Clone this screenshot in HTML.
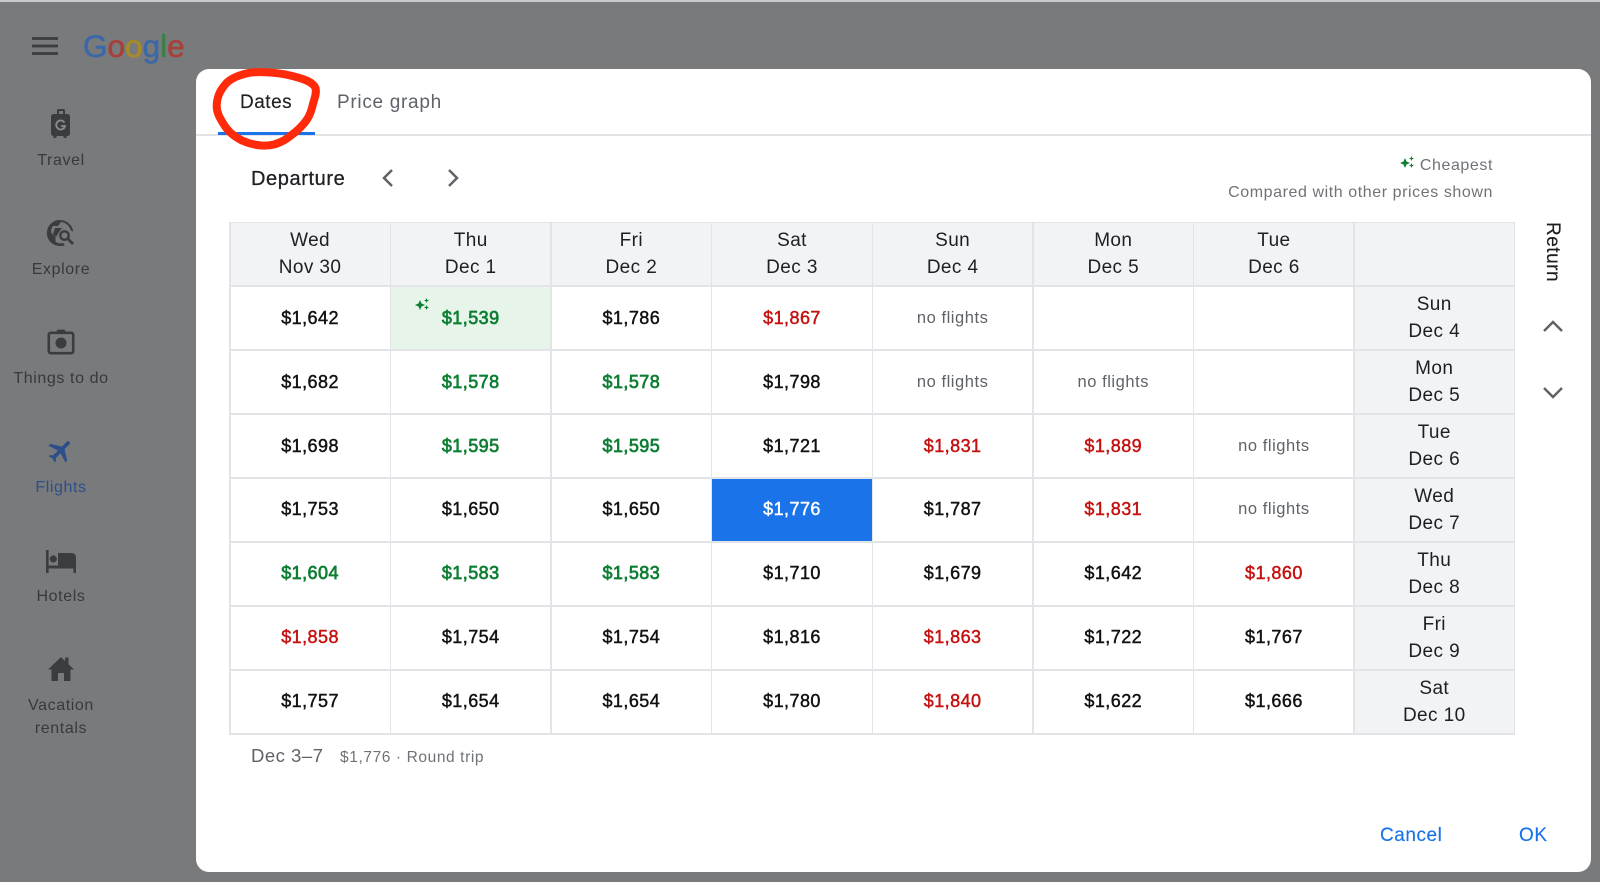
<!DOCTYPE html>
<html lang="en">
<head>
<meta charset="utf-8">
<title>Google Flights - Dates</title>
<style>
*{box-sizing:border-box;margin:0;padding:0}
html,body{width:1600px;height:882px;overflow:hidden;background:#797a7c}
body{font-family:"Liberation Sans",sans-serif;position:relative}
#w{position:absolute;left:0;top:0;width:1600px;height:882px;filter:blur(.35px)}
.a{position:absolute;white-space:nowrap}
.strip{left:0;top:0;width:1600px;height:2px;background:#c9cacc}
.nav{left:0;width:122px;text-align:center;color:#37393c;font-size:16px;letter-spacing:.6px;line-height:22px}
.nav.f{color:#2c4f8a}
.ic{position:absolute}
#dlg{position:absolute;left:196px;top:69px;width:1395px;height:803px;background:#fff;border-radius:13px}
#grid{position:absolute;left:229px;top:221.5px;width:1286px;height:513px;background:#e2e4e8;display:grid;grid-template-columns:repeat(7,159.15px) 1fr;grid-template-rows:repeat(8,1fr);gap:1.5px;padding:1.5px}
#grid div{background:#fff;display:flex;align-items:center;justify-content:center;text-align:center;font-size:18px;color:#111;letter-spacing:.45px;-webkit-text-stroke:.45px currentColor;position:relative}
#grid div.h{background:#f1f3f4;line-height:27px;-webkit-text-stroke:0;color:#1d1f21;font-size:19px;letter-spacing:.4px;padding-bottom:0}
#grid div.g{color:#0d7e33;-webkit-text-stroke:.7px currentColor}
#grid div.r{color:#c5100f}
#grid div.n{color:#5f6368;font-size:16.5px;letter-spacing:.55px;-webkit-text-stroke:0}
#grid div.s{background:#1a73e8;color:#fff}
#grid div.c{background:#e6f4ea}
</style>
</head>
<body>
<div id="w">
<div class="a strip"></div>

<!-- header -->
<svg class="ic" style="left:31px;top:37px" width="28" height="18" viewBox="0 0 28 18"><path d="M1 1.500h26M1 9h26M1 16.500h26" stroke="#3a3c3f" stroke-width="2.800" fill="none"/></svg>
<div class="a" style="left:83px;top:27px;font-size:31.5px;line-height:38px;letter-spacing:0;-webkit-text-stroke:.6px currentColor"><span style="color:#3c68a8">G</span><span style="color:#a8403a">o</span><span style="color:#a98a2a">o</span><span style="color:#3c68a8">g</span><span style="color:#3b8048">l</span><span style="color:#a8403a">e</span></div>

<!-- sidebar -->
<svg class="ic" style="left:46px;top:108px" width="30" height="32" viewBox="0 0 30 32"><path d="M11 6V2.500C11 1.700 11.700 1 12.500 1h5c.8 0 1.500.7 1.500 1.500V6h2c2 0 3 1 3 3v16c0 2-1 3-3 3h-.5v2h-3v-2h-7v2h-3v-2H8c-2 0-3-1-3-3V9c0-2 1-3 3-3zm2 0h4V3h-4z" fill="#3a3c3f" fill-rule="evenodd"/><path d="M18.500 14.500a4.500 4.500 0 1 0 .6 3.500H15" stroke="#8b8c8e" stroke-width="1.800" fill="none"/></svg>
<div class="a nav" style="top:150px">Travel</div>

<svg class="ic" style="left:46px;top:218px" width="32" height="32" viewBox="0 0 32 32"><path d="M14 2a13 13 0 0 0-9 22.500C8 27 11 28 14.500 28c1.500 0 3-.3 4.300-.8l-1.500-2.200c-1 .3-1.900.4-2.800.4-2 0-3.500-.5-5-2V19l-4-4c-.2-.6-.3-1.200-.3-2 0-1.800.6-3.500 1.600-5H12l3-4c5 .5 8.700 4 9.800 8.500l2.500 1C26.500 7.500 21 2 14 2z" fill="#3a3c3f"/><path d="M9 10h7l-3 4-3 5 -3-3z" fill="#3a3c3f"/><circle cx="18.500" cy="17.500" r="4.200" stroke="#3a3c3f" stroke-width="2.400" fill="none"/><path d="M21.800 20.800 27 26" stroke="#3a3c3f" stroke-width="2.800"/></svg>
<div class="a nav" style="top:259px">Explore</div>

<svg class="ic" style="left:47px;top:329px" width="28" height="26" viewBox="0 0 28 26"><path d="M9 3l1.500-2.400h7L19 3" fill="#3a3c3f"/><rect x="1.800" y="3.800" width="24.400" height="20.400" rx="2" fill="none" stroke="#3a3c3f" stroke-width="2.600"/><circle cx="14" cy="14" r="5.500" fill="#3a3c3f"/></svg>
<div class="a nav" style="top:368px">Things to do</div>

<svg class="ic" style="left:46px;top:436px" width="30" height="30" viewBox="0 0 24 24"><path transform="rotate(45 12 12)" d="M21 16v-2l-8-5V3.500c0-.83-.67-1.500-1.500-1.500S10 2.670 10 3.500V9l-8 5v2l8-2.500V19l-2 1.500V22l3.500-1 3.500 1v-1.500L13 19v-5.500l8 2.500z" fill="#2c4f8a"/></svg>
<div class="a nav f" style="top:477px">Flights</div>

<svg class="ic" style="left:45px;top:547px" width="32" height="28" viewBox="0 0 32 28"><path d="M1 3h2.600v15.500H13V6h13.500c2.800 0 4.500 1.800 4.500 4.500V26h-2.600v-4.500H3.600V26H1z" fill="#3a3c3f"/><circle cx="8.300" cy="12" r="3.600" fill="#3a3c3f"/></svg>
<div class="a nav" style="top:586px">Hotels</div>

<svg class="ic" style="left:47px;top:656px" width="28" height="26" viewBox="0 0 28 26"><path d="M11 25v-8h6v8h6.500V13.500H27L21.500 8.300V1.500H18v3.500L14 1 1 13.500h3.500V25z" fill="#3a3c3f"/></svg>
<div class="a nav" style="top:695px">Vacation</div>
<div class="a nav" style="top:718px">rentals</div>

<!-- dialog -->
<div id="dlg"></div>
<div class="a" style="left:196px;top:134px;width:1395px;height:1.500px;background:#e2e4e8"></div>
<div class="a" style="left:218px;top:131.500px;width:97px;height:3px;background:#1a73e8"></div>
<div class="a" style="left:240px;top:91px;font-size:19px;line-height:24px;color:#202124;letter-spacing:.5px;-webkit-text-stroke:.15px #202124">Dates</div>
<div class="a" style="left:337px;top:91px;font-size:19px;line-height:24px;color:#5f6368;letter-spacing:.7px">Price graph</div>

<svg class="ic" style="left:205px;top:60px" width="125" height="100" viewBox="205 60 125 100"><path d="M250 72.700C262 71 282 73 295 76.700C304 79 313 82 315.500 88C317 94 314 99 312.500 106C310.500 114 308 121 296 131.500C288 138 283 142 274 144.500C264 147 252 145 242 140.500C233 136 228 131 224.500 125.500C219 117 216.500 112 216.700 105.500C217 98 219 91 227 82.500C232 78 241 74.500 250 72.700Z" fill="none" stroke="#ff2a0a" stroke-width="8" stroke-linejoin="round"/></svg>

<div class="a" style="left:251px;top:167px;font-size:20px;line-height:24px;color:#202124;letter-spacing:.6px;-webkit-text-stroke:.3px #202124">Departure</div>
<svg class="ic" style="left:380px;top:168px" width="16" height="20" viewBox="0 0 16 20"><path d="M12 2 4 10l8 8" fill="none" stroke="#5f6368" stroke-width="2.500"/></svg>
<svg class="ic" style="left:445px;top:168px" width="16" height="20" viewBox="0 0 16 20"><path d="M4 2l8 8-8 8" fill="none" stroke="#5f6368" stroke-width="2.500"/></svg>

<svg class="ic" style="left:1399px;top:155px" width="17" height="15" viewBox="0 0 17 15"><path d="M6 3l1.500 3.500L11 8 7.500 9.500 6 13 4.500 9.500 1 8l3.500-1.500z" fill="#0d7e33"/><path d="M12.500 1l.7 1.800L15 3.500l-1.800.7-.7 1.800-.7-1.800L10 3.500l1.800-.7zM12.500 8l.7 1.800 1.800.7-1.800.7-.7 1.800-.7-1.800-1.800-.7 1.800-.7z" fill="#0d7e33"/></svg>
<div class="a" style="right:107px;top:156px;font-size:16px;line-height:20px;color:#6f7377;letter-spacing:.58px">Cheapest</div>
<div class="a" style="right:107px;top:183px;font-size:16px;line-height:20px;color:#6f7377;letter-spacing:.58px">Compared with other prices shown</div>

<!-- grid -->
<div id="grid">
<div class="h">Wed<br>Nov 30</div><div class="h">Thu<br>Dec 1</div><div class="h">Fri<br>Dec 2</div><div class="h">Sat<br>Dec 3</div><div class="h">Sun<br>Dec 4</div><div class="h">Mon<br>Dec 5</div><div class="h">Tue<br>Dec 6</div><div class="h"></div>

<div>$1,642</div><div class="g c">$1,539<svg style="position:absolute;left:23px;top:10px" width="17" height="15" viewBox="0 0 17 15"><path d="M6 3l1.500 3.500L11 8 7.500 9.500 6 13 4.500 9.500 1 8l3.500-1.500z" fill="#0d7e33"/><path d="M12.500 1l.7 1.800L15 3.500l-1.800.7-.7 1.800-.7-1.800L10 3.500l1.800-.7zM12.500 8l.7 1.800 1.800.7-1.800.7-.7 1.800-.7-1.800-1.800-.7 1.800-.7z" fill="#0d7e33"/></svg></div><div>$1,786</div><div class="r">$1,867</div><div class="n">no flights</div><div></div><div></div><div class="h">Sun<br>Dec 4</div>

<div>$1,682</div><div class="g">$1,578</div><div class="g">$1,578</div><div>$1,798</div><div class="n">no flights</div><div class="n">no flights</div><div></div><div class="h">Mon<br>Dec 5</div>

<div>$1,698</div><div class="g">$1,595</div><div class="g">$1,595</div><div>$1,721</div><div class="r">$1,831</div><div class="r">$1,889</div><div class="n">no flights</div><div class="h">Tue<br>Dec 6</div>

<div>$1,753</div><div>$1,650</div><div>$1,650</div><div class="s">$1,776</div><div>$1,787</div><div class="r">$1,831</div><div class="n">no flights</div><div class="h">Wed<br>Dec 7</div>

<div class="g">$1,604</div><div class="g">$1,583</div><div class="g">$1,583</div><div>$1,710</div><div>$1,679</div><div>$1,642</div><div class="r">$1,860</div><div class="h">Thu<br>Dec 8</div>

<div class="r">$1,858</div><div>$1,754</div><div>$1,754</div><div>$1,816</div><div class="r">$1,863</div><div>$1,722</div><div>$1,767</div><div class="h">Fri<br>Dec 9</div>

<div>$1,757</div><div>$1,654</div><div>$1,654</div><div>$1,780</div><div class="r">$1,840</div><div>$1,622</div><div>$1,666</div><div class="h">Sat<br>Dec 10</div>
</div>

<!-- return -->
<div class="a" style="left:1541px;top:222px;writing-mode:vertical-rl;font-size:19px;line-height:22px;color:#1d1f21;letter-spacing:.5px;-webkit-text-stroke:.2px #1d1f21">Return</div>
<svg class="ic" style="left:1542px;top:318px" width="22" height="18" viewBox="0 0 22 18"><path d="M2 13l9-9 9 9" fill="none" stroke="#5f6368" stroke-width="2.500"/></svg>
<svg class="ic" style="left:1542px;top:383px" width="22" height="18" viewBox="0 0 22 18"><path d="M2 5l9 9 9-9" fill="none" stroke="#5f6368" stroke-width="2.500"/></svg>

<!-- footer -->
<div class="a" style="left:251px;top:744px;font-size:18.500px;line-height:24px;color:#5f6368;letter-spacing:.5px">Dec 3–7</div>
<div class="a" style="left:340px;top:748px;font-size:15.500px;line-height:20px;color:#6f7377;letter-spacing:.6px">$1,776 · Round trip</div>
<div class="a" style="left:1380px;top:824px;font-size:19px;line-height:24px;color:#1a73e8;letter-spacing:.55px;-webkit-text-stroke:.15px #1a73e8">Cancel</div>
<div class="a" style="left:1519px;top:824px;font-size:19px;line-height:24px;color:#1a73e8;letter-spacing:.55px;-webkit-text-stroke:.15px #1a73e8">OK</div>
</div>
</body>
</html>
